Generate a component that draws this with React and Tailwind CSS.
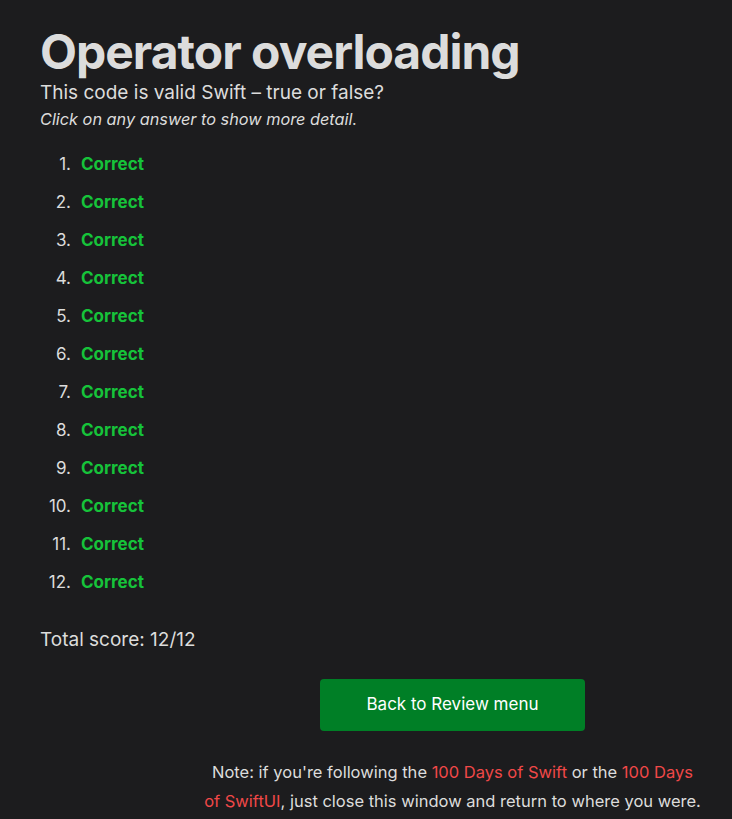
const answers = Array.from({ length: 12 }, (_, i) => i + 1);

export default function App() {
  return (
    <div className="min-h-[819px] w-full overflow-hidden bg-[#1c1c1e] text-[#dcdcdc] font-['Inter',sans-serif]">
      <div className="w-[865px] pl-10 pt-[22px] pb-4">
        <h1 className="text-[48px] font-bold leading-[60px] tracking-[-1px] text-[#dcdcdc]">
          Operator overloading
        </h1>
        <p className="text-[19px] leading-[24px] -mt-[1px]">
          This code is valid Swift – true or false?
        </p>
        <p className="text-[16.3px] italic leading-[24px] mt-[2px]">
          Click on any answer to show more detail.
        </p>

        <ol className="mt-[15px] text-[17px]">
          {answers.map((n) => (
            <li key={n} className="flex h-[38px] items-center">
              <span className="w-[31px] text-right">{n}.</span>
              <span className="ml-[10px] font-bold text-[#16c33a] cursor-pointer">Correct</span>
            </li>
          ))}
        </ol>

        <p className="mt-[26px] text-[19px] leading-[24px]">Total score: 12/12</p>

        <div className="flex justify-center mt-[27px]">
          <button className="w-[265px] h-[52px] rounded bg-[#007f26] text-white text-[17px]">
            Back to Review menu
          </button>
        </div>

        <p className="mx-auto mt-[27px] w-[520px] text-center text-[16.5px] leading-[29px]">
          Note: if you're following the{" "}
          <a className="text-[#f04848]">100 Days of Swift</a> or the{" "}
          <a className="text-[#f04848]">
            100 Days
            <br />
            of SwiftUI
          </a>
          , just close this window and return to where you were.
        </p>
      </div>
    </div>
  );
}
